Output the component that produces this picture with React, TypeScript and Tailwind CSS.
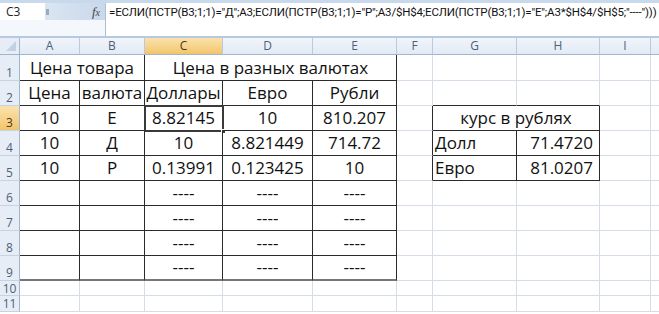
import React from 'react';

type Border = 'g' | 'd' | 'n' | 't';

const borderR: Record<Border, string> = {
    g: 'border-r border-r-[#d6dde8]',
    d: 'border-r border-r-[#2b2b2b]',
    n: 'border-r border-r-transparent',
    t: 'border-r-2 border-r-[#6b6b6b]',
};
const borderB: Record<Border, string> = {
    g: 'border-b border-b-[#d6dde8]',
    d: 'border-b border-b-[#2b2b2b]',
    n: 'border-b border-b-transparent',
    t: 'border-b-2 border-b-[#777777]',
};

type CellProps = {
    children?: React.ReactNode;
    span?: string;
    r?: Border;
    b?: Border;
    align?: 'center' | 'left' | 'right';
};

const Cell: React.FC<CellProps> = ({ children, span = '', r = 'g', b = 'g', align = 'center' }) => {
    const justify = align === 'center' ? 'justify-center' : align === 'left' ? 'justify-start pl-[2px]' : 'justify-end pr-[6px]';
    return (
        <div className={`flex items-end pb-[1px] overflow-hidden whitespace-nowrap text-[17px] leading-[22px] text-[#111] ${justify} ${borderR[r]} ${borderB[b]} ${span}`}>
            {children}
        </div>
    );
};

const RowHead: React.FC<{ n: number; active?: boolean; small?: boolean }> = ({ n, active, small }) => (
    <div
        className={`flex justify-center text-[12px] leading-[13px] border-r border-r-[#9eb6ce] border-b border-b-[#c5d3e3] ${
            small ? 'items-center' : 'items-end pb-[1px]'
        } ${active ? 'bg-gradient-to-b from-[#fbe2ad] to-[#f2c56c] text-[#4a3a1a]' : 'bg-[#e6edf7] text-[#4f5f78]'}`}
    >
        {n}
    </div>
);

const cols = ['A', 'B', 'C', 'D', 'E', 'F', 'G', 'H', 'I', ''];

const formula = '=ЕСЛИ(ПСТР(B3;1;1)="Д";A3;ЕСЛИ(ПСТР(B3;1;1)="Р";A3/$H$4;ЕСЛИ(ПСТР(B3;1;1)="Е";A3*$H$4/$H$5;"----")))';

// rows 3..9 of the main table: A, B, C, D, E
const tableRows: string[][] = [
    ['10', 'Е', '8.82145', '10', '810.207'],
    ['10', 'Д', '10', '8.821449', '714.72'],
    ['10', 'Р', '0.13991', '0.123425', '10'],
    ['', '', '----', '----', '----'],
    ['', '', '----', '----', '----'],
    ['', '', '----', '----', '----'],
    ['', '', '----', '----', '----'],
];

const rates: Record<number, [string, string]> = {
    4: ['Долл', '71.4720'],
    5: ['Евро', '81.0207'],
};

const App: React.FC = () => {
    return (
        <div className="w-[659px] h-[314px] overflow-hidden bg-white" style={{ fontFamily: '"Open Sans", "Noto Sans", sans-serif' }}>
            {/* formula bar */}
            <div className="h-[3px] bg-[#c9d9ec]" />
            <div className="flex h-[35px] border-b-2 border-b-[#b9c9dd]">
                <div className="w-[106px] flex flex-col border-r border-r-[#aebfd4]">
                    <div className="flex h-[17px]">
                        <div className="w-[45px] bg-white pl-[6px] text-[12px] leading-[17px] text-[#222]">C3</div>
                        <div className="flex-1 flex items-center justify-between bg-gradient-to-r from-[#dbe5f2] to-[#c9d8eb]">
                            <span className="ml-[1px] w-[3px] h-[6px] bg-[#9aabc0]" />
                            <span className="mr-[5px] text-[13px] italic text-[#444] leading-[17px]" style={{ fontFamily: '"Liberation Serif", serif' }}>
                                f<span className="text-[10px]">x</span>
                            </span>
                        </div>
                    </div>
                    <div className="flex-1 bg-[#f4f7fb]" />
                </div>
                <div
                    className="flex-1 pl-[3px] pt-[2px] text-[11.5px] leading-[14px] tracking-[-0.18px] text-[#111] whitespace-nowrap overflow-hidden"
                    style={{ fontFamily: 'Roboto, "Open Sans", sans-serif' }}
                >
                    {formula}
                </div>
            </div>

            {/* sheet */}
            <div className="grid grid-cols-[20px_60px_65px_78px_90px_84px_36px_84px_83px_51px_20px] grid-rows-[17px_26px_25px_25px_25px_25px_25px_25px_25px_25px_15px_16px]">
                {/* column headers */}
                <div className="bg-[#e6edf7] border-r border-r-[#9eb6ce] border-b border-b-[#9eb6ce] relative overflow-hidden">
                    <div className="absolute right-[3px] bottom-[3px] w-0 h-0 border-l-[10px] border-l-transparent border-b-[10px] border-b-[#c3d1e2]" />
                </div>
                {cols.map((c, i) => (
                    <div
                        key={i}
                        className={`flex items-center justify-center text-[12px] border-r border-r-[#b8cadf] border-b border-b-[#9eb6ce] ${
                            c === 'C' ? 'bg-gradient-to-b from-[#fbe2ad] to-[#f2c56c] text-[#4a3a1a]' : 'bg-gradient-to-b from-[#f1f5fb] to-[#e2eaf5] text-[#4f5f78]'
                        }`}
                    >
                        {c}
                    </div>
                ))}

                {/* row 1 */}
                <RowHead n={1} />
                <Cell span="col-span-2" r="d" b="d">Цена товара</Cell>
                <Cell span="col-span-3" r="d" b="d">Цена в разных валютах</Cell>
                <Cell /><Cell /><Cell /><Cell /><Cell />

                {/* row 2 */}
                <RowHead n={2} />
                <Cell r="d" b="d">Цена</Cell>
                <Cell r="d" b="d">валюта</Cell>
                <Cell r="d" b="d">Доллары</Cell>
                <Cell r="d" b="d">Евро</Cell>
                <Cell r="d" b="d">Рубли</Cell>
                <Cell b="g" />
                <Cell b="d" />
                <Cell b="d" />
                <Cell /><Cell />

                {/* rows 3..9 */}
                {tableRows.map((row, idx) => {
                    const n = idx + 3;
                    const last = n === 9;
                    const bb: Border = last ? 't' : 'd';
                    return (
                        <React.Fragment key={n}>
                            <RowHead n={n} active={n === 3} />
                            {row.map((v, j) => (
                                <div key={j} className="relative flex">
                                    <Cell span="flex-1" r="d" b={bb}>{v}</Cell>
                                    {n === 3 && j === 2 && (
                                        <>
                                            <div className="absolute -left-[1px] -top-[1px] -right-[1px] -bottom-[1px] border-2 border-[#3a3a3a] pointer-events-none" />
                                            <div className="absolute -right-[3px] -bottom-[3px] w-[5px] h-[5px] bg-[#3a3a3a] border border-white" />
                                        </>
                                    )}
                                </div>
                            ))}
                            <Cell r={n >= 3 && n <= 5 ? 'd' : 'g'} />
                            {n === 3 ? (
                                <Cell span="col-span-2" r="d" b="d">курс в рублях</Cell>
                            ) : rates[n] ? (
                                <>
                                    <Cell r="d" b="d" align="left">{rates[n][0]}</Cell>
                                    <Cell r="d" b="d" align="right">{rates[n][1]}</Cell>
                                </>
                            ) : (
                                <>
                                    <Cell />
                                    <Cell />
                                </>
                            )}
                            <Cell />
                            <Cell />
                        </React.Fragment>
                    );
                })}

                {/* rows 10, 11 */}
                {[10, 11].map((n) => (
                    <React.Fragment key={n}>
                        <RowHead n={n} small />
                        {cols.map((_, j) => (
                            <Cell key={j} />
                        ))}
                    </React.Fragment>
                ))}
            </div>
        </div>
    );
};

export default App;
